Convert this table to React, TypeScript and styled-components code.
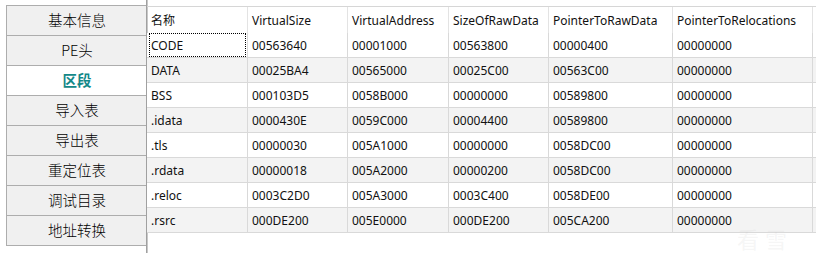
import React from "react";
import styled, { createGlobalStyle } from "styled-components";

const GlobalStyle = createGlobalStyle`
  html, body {
    margin: 0;
    padding: 0;
    background: #ffffff;
  }
  body {
    font-family: "Noto Sans", "Noto Sans CJK SC", sans-serif;
  }
`;

const menus = ["基本信息", "PE头", "区段", "导入表", "导出表", "重定位表", "调试目录", "地址转换"];

// 最后一列只露出一点边，不放文字
const columns = [
  { title: "名称", width: 101 },
  { title: "VirtualSize", width: 100 },
  { title: "VirtualAddress", width: 101 },
  { title: "SizeOfRawData", width: 100 },
  { title: "PointerToRawData", width: 124 },
  { title: "PointerToRelocations", width: 140 },
  { title: "", width: 140 },
];

const sections = [
  ["CODE", "00563640", "00001000", "00563800", "00000400", "00000000", ""],
  ["DATA", "00025BA4", "00565000", "00025C00", "00563C00", "00000000", ""],
  ["BSS", "000103D5", "0058B000", "00000000", "00589800", "00000000", ""],
  [".idata", "0000430E", "0059C000", "00004400", "00589800", "00000000", ""],
  [".tls", "00000030", "005A1000", "00000000", "0058DC00", "00000000", ""],
  [".rdata", "00000018", "005A2000", "00000200", "0058DC00", "00000000", ""],
  [".reloc", "0003C2D0", "005A3000", "0003C400", "0058DE00", "00000000", ""],
  [".rsrc", "000DE200", "005E0000", "000DE200", "005CA200", "00000000", ""],
];

export default function App() {
  return (
    <>
      <GlobalStyle />
      <Window>
        {/* 左侧菜单 */}
        <Sidebar>
          {menus.map((m) => (
            <MenuItem key={m} $active={m === "区段"}>
              {m}
            </MenuItem>
          ))}
        </Sidebar>
        {/* 区段表 */}
        <Pane>
          <HeaderRow>
            {columns.map((c, j) => (
              <HeadCell key={j} $w={c.width}>
                {c.title}
              </HeadCell>
            ))}
          </HeaderRow>
          {sections.map((row, i) => (
            <Row key={row[0]} $alt={i % 2 === 1}>
              {row.map((v, j) => (
                <Cell key={j} $w={columns[j].width} $focus={i === 0 && j === 0}>
                  {v}
                </Cell>
              ))}
            </Row>
          ))}
          <Watermark>看雪</Watermark>
        </Pane>
      </Window>
    </>
  );
}

const Window = styled.div`
  display: flex;
  width: 816px;
  height: 253px;
  overflow: hidden;
  background: #ffffff;
`;

const Sidebar = styled.div`
  display: flex;
  flex-direction: column;
  flex: none;
  width: 140px;
  margin: 5px 0 0 6px;
  align-self: flex-start;
  border-top: 1px solid #adadad;
  border-left: 1px solid #adadad;
  box-sizing: border-box;
`;

const MenuItem = styled.div<{ $active?: boolean }>`
  height: 30px;
  box-sizing: border-box;
  border-bottom: 1px solid #adadad;
  display: flex;
  align-items: center;
  justify-content: center;
  padding: 0 0 3px 1px;
  background: ${(p) => (p.$active ? "#ffffff" : "#f0f0f0")};
  color: ${(p) => (p.$active ? "#138888" : "#000000")};
  font-weight: ${(p) => (p.$active ? 700 : 300)};
  font-size: 14.5px;
  font-family: "Noto Sans CJK SC", sans-serif;
`;

const Pane = styled.div`
  position: relative;
  flex: 1;
  min-width: 0;
  border-left: 1px solid #a0a0a0;
  box-shadow: inset 1px 0 0 #c8c8c8;
  padding-top: 6px;
  display: flex;
  flex-direction: column;
  font-size: 12px;
  color: #111;
`;

const HeaderRow = styled.div`
  display: flex;
  height: 27px;
  border-top: 1px solid #d6d6d6;
  box-sizing: border-box;
`;

const HeadCell = styled.div<{ $w: number }>`
  flex: none;
  width: ${(p) => p.$w}px;
  box-sizing: border-box;
  border-right: 1px solid #e3e3e3;
  padding-left: 4px;
  display: flex;
  align-items: center;
  white-space: nowrap;
`;

const Row = styled.div<{ $alt?: boolean }>`
  display: flex;
  height: 25px;
  box-sizing: border-box;
  border-bottom: 1px solid #d9d9d9;
  background: ${(p) => (p.$alt ? "#f3f3f3" : "#ffffff")};
`;

const Cell = styled.div<{ $w: number; $focus?: boolean }>`
  position: relative;
  flex: none;
  width: ${(p) => p.$w}px;
  box-sizing: border-box;
  border-right: 1px solid #d9d9d9;
  padding-left: 4px;
  display: flex;
  align-items: center;
  white-space: nowrap;
  &::after {
    content: "";
    display: ${(p) => (p.$focus ? "block" : "none")};
    position: absolute;
    top: 0;
    bottom: 0;
    left: 2px;
    right: 1px;
    border: 1px dotted #000;
  }
`;

const Watermark = styled.div`
  position: absolute;
  left: 590px;
  top: 222px;
  font-family: "Noto Sans CJK SC", sans-serif;
  font-size: 22px;
  letter-spacing: 6px;
  color: rgba(200, 200, 200, 0.18);
  pointer-events: none;
`;
